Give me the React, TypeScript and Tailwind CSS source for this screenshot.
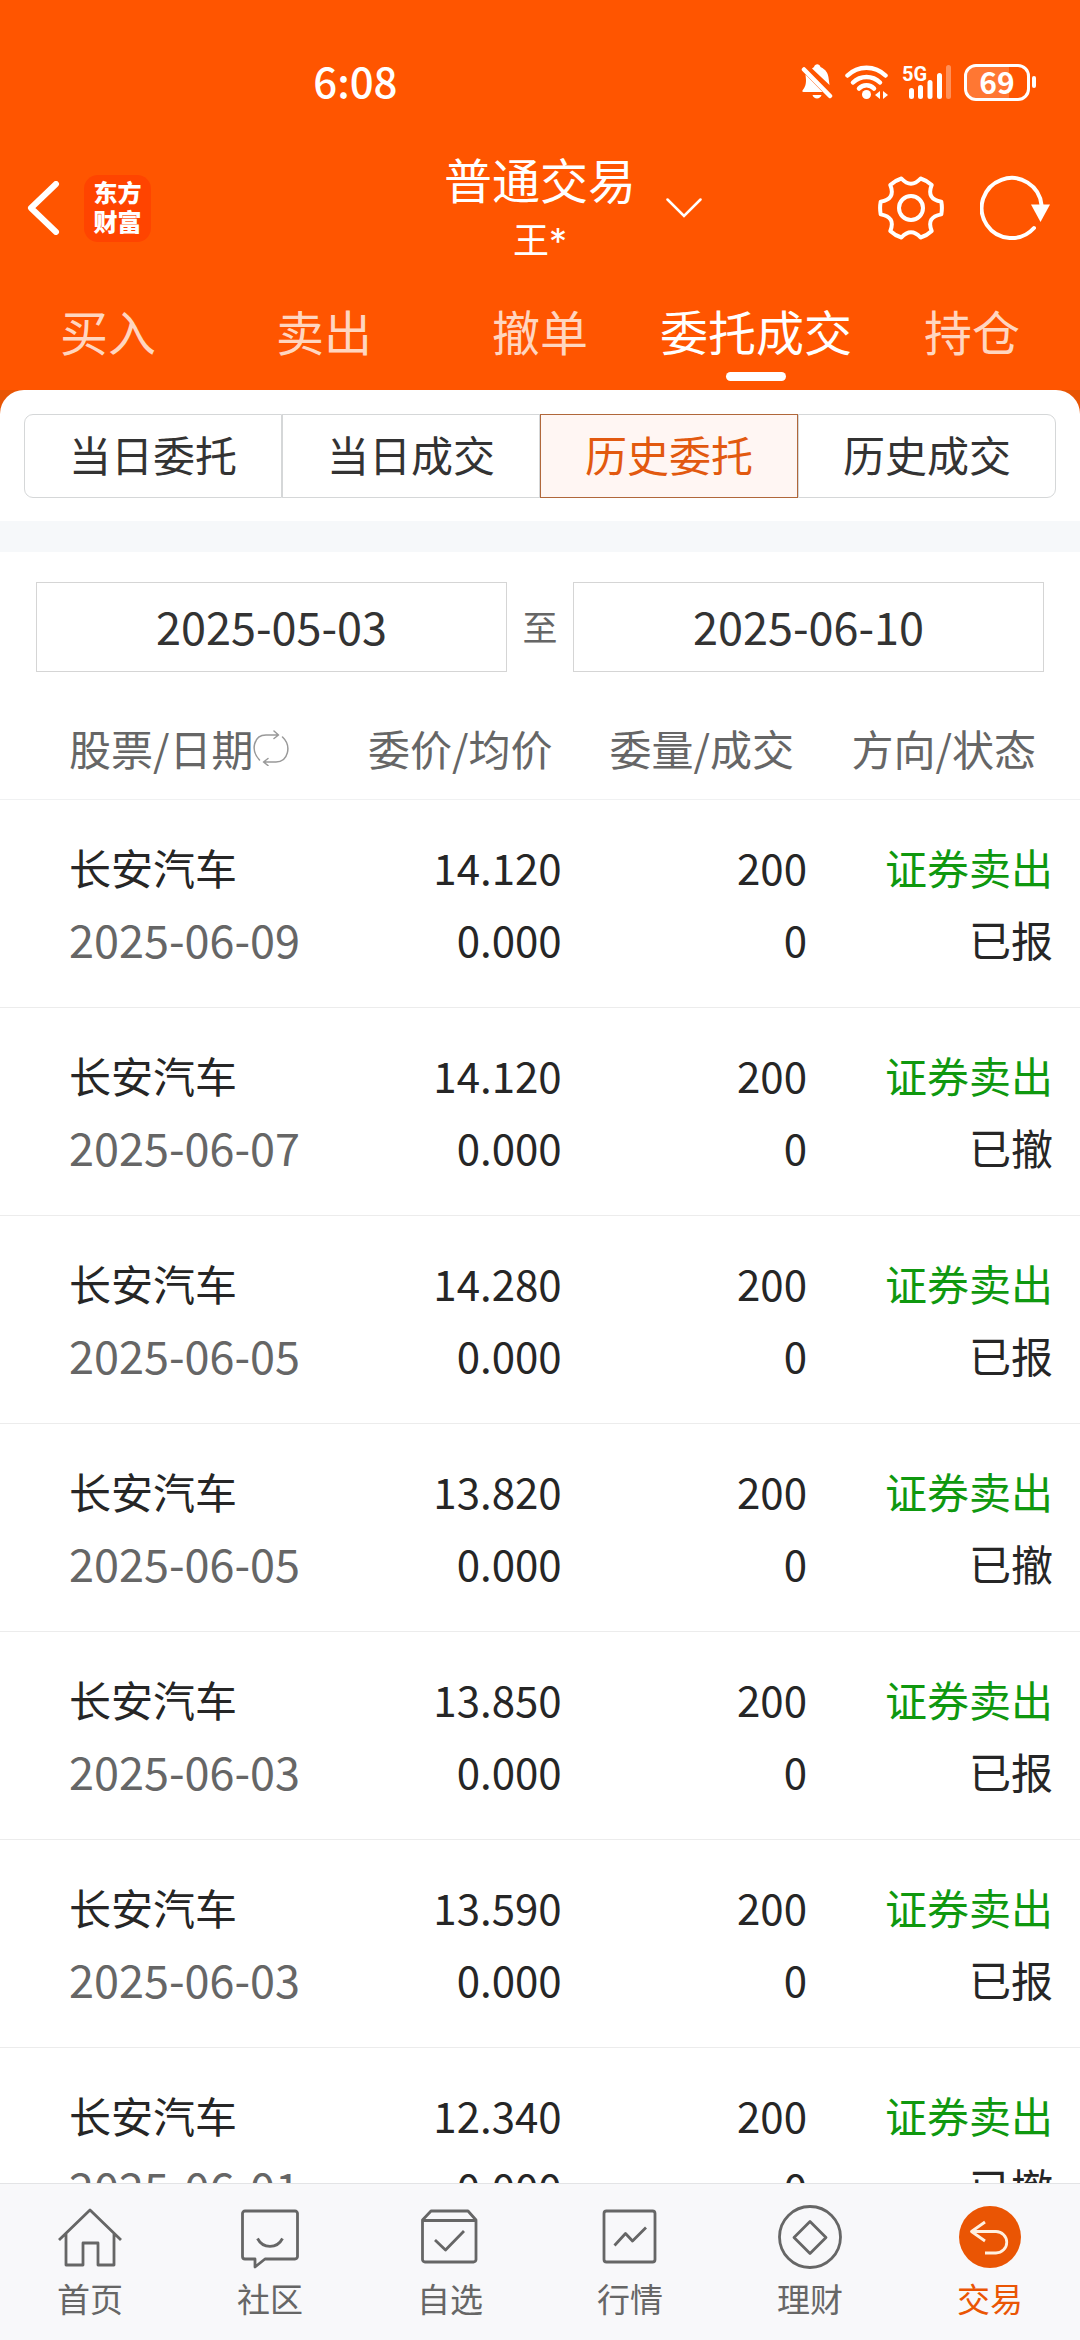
import { useState } from "react";
import type { ReactNode } from "react";
import clsx from "clsx";

const tradeTabs = ["买入", "卖出", "撤单", "委托成交", "持仓"];
const recordTabs = ["当日委托", "当日成交", "历史委托", "历史成交"];

type Order = {
  name: string;
  date: string;
  price: string;
  average: string;
  amount: number;
  filled: number;
  side: string;
  status: string;
};

const makeOrder = (date: string, price: string, status: string): Order => ({
  name: "长安汽车",
  date,
  price,
  average: "0.000",
  amount: 200,
  filled: 0,
  side: "证券卖出",
  status,
});

const orders: Order[] = [
  makeOrder("2025-06-09", "14.120", "已报"),
  makeOrder("2025-06-07", "14.120", "已撤"),
  makeOrder("2025-06-05", "14.280", "已报"),
  makeOrder("2025-06-05", "13.820", "已撤"),
  makeOrder("2025-06-03", "13.850", "已报"),
  makeOrder("2025-06-03", "13.590", "已报"),
  makeOrder("2025-06-01", "12.340", "已撤"),
];

function StatusBar() {
  return (
    <div className="flex h-16 items-center justify-between pl-[29%] pr-11">
      <span className="pb-1 text-[42px] font-medium leading-[60px]">6:08</span>
      <div className="flex items-center gap-3">
        <svg width="32" height="36" viewBox="0 0 30 36" fill="currentColor" aria-hidden="true">
          <path d="M3.500 10.500 20.500 28H1.500C.2 28 0 27 .8 26 3 23 4 21 4 16z" />
          <path d="M10 4.500 12 3C13-.6 17.500-.6 18.500 3 24 5.500 26 9.500 26.500 13.500L27.500 21z" />
          <path d="M2 5.500 28 32" stroke="currentColor" strokeWidth="4.500" strokeLinecap="round" />
          <path d="M10.500 31h9c-1 4.500-8 4.500-9 0z" />
        </svg>
        <svg width="45" height="36" viewBox="0 0 45 36" fill="none" stroke="currentColor" strokeWidth="4.500" strokeLinecap="round" aria-hidden="true">
          <path d="M2.500 11.500C13 1 30 1 40.500 11.500" />
          <path d="M8 18.500C15.500 11 27.500 11 35 18.500" />
          <path d="M14 24.500C18 20 25 20 29 24.500" />
          <circle cx="21.500" cy="30.500" r="4.500" fill="currentColor" stroke="none" />
          <path d="M35 27v8l-5-4zM38 27v8l5-4z" fill="currentColor" stroke="none" />
        </svg>
        <svg width="50" height="36" viewBox="0 0 50 36" fill="currentColor" className="overflow-visible" aria-hidden="true">
          <text x="0" y="17" className="font-['Roboto',sans-serif] text-[20px] font-bold">5G</text>
          <rect x="7" y="24" width="5" height="11" rx="2.500" />
          <rect x="16" y="21" width="5" height="14" rx="2.500" />
          <rect x="25.500" y="16" width="5" height="19" rx="2.500" />
          <rect x="35" y="9" width="5" height="26" rx="2.500" />
          <rect x="44" y="1" width="5" height="34" rx="2.500" opacity=".35" />
        </svg>
        <div className="flex items-center gap-0.5">
          <div className="relative flex h-[37px] w-[66px] items-center justify-center rounded-xl border-3 border-white">
            <div className="absolute inset-y-0 left-0 w-[70%] rounded-l-[9px] bg-white/20" />
            <span className="relative pb-0.5 text-[30px] font-bold">69</span>
          </div>
          <div className="h-3 w-1 rounded-full bg-white" />
        </div>
      </div>
    </div>
  );
}

function TitleBar() {
  return (
    <div className="mt-[34px] grid h-[120px] grid-cols-[1fr_auto_1fr] items-center">
      <div className="flex items-center gap-6 pl-[27px]">
        <button aria-label="返回">
          <svg width="33" height="54" viewBox="0 0 33 54" fill="none" stroke="currentColor" strokeWidth="6" strokeLinecap="round" strokeLinejoin="round">
            <path d="M29 3 4 27l25 24" />
          </svg>
        </button>
        <div className="w-[67px] rounded-[14px] bg-[#ff4400] pb-[7px] pt-0.5 text-center text-[24px] font-black leading-[29px]">
          东方
          <br />
          财富
        </div>
      </div>
      <div className="text-center">
        <h1 className="text-[48px] leading-[60px]">普通交易</h1>
        <p className="text-[36px] leading-[60px]">
          王<span className="font-['Inter',sans-serif] leading-none">*</span>
        </p>
      </div>
      <div className="flex items-center pl-[30px] pr-[30px]">
        <button aria-label="切换账户">
          <svg width="36" height="20" viewBox="0 0 36 20" fill="none" stroke="currentColor" strokeWidth="2.500" strokeLinecap="round">
            <path d="M1.500 1.500 18 18 34.500 1.500" />
          </svg>
        </button>
        <button aria-label="设置" className="ml-auto">
          <svg width="66" height="66" viewBox="-33 -33 66 66" fill="none" stroke="currentColor" strokeWidth="4" strokeLinejoin="round">
            <path d="M30.300 6.400Q31.500 0 30.300-6.400 15-9 20.700-23 16-27.500 9.600-29.500 0-19-9.600-29.500-16-27.500-20.700-23-15-9-30.300-6.400-31.500 0-30.300 6.400-15 9-20.700 23-16 27.500-9.600 29.500 0 19 9.600 29.500 16 27.500 20.700 23 15 9 30.300 6.400z" />
            <circle r="12" />
          </svg>
        </button>
        <button aria-label="刷新" className="ml-9">
          <svg width="70" height="66" viewBox="0 0 70 66" fill="none" stroke="currentColor" strokeWidth="4" strokeLinecap="round">
            <path d="M54 53A30 30 0 1 1 61.500 30" />
            <path d="M51 29.500h19L60.500 47z" fill="currentColor" stroke="none" />
          </svg>
        </button>
      </div>
    </div>
  );
}

const navItems: { label: string; icon: ReactNode }[] = [
  {
    label: "首页",
    icon: <path d="M1 35 32 5l31 30M8 29v31h17V38h15v22h16V29" />,
  },
  {
    label: "社区",
    icon: (
      <>
        <path d="M7 6h50a2.500 2.500 0 0 1 2.500 2.500v43A2.500 2.500 0 0 1 57 54H27l-10 8v-8H7a2.500 2.500 0 0 1-2.500-2.500v-43A2.500 2.500 0 0 1 7 6z" />
        <path d="M19.500 33.500C25 44 39 44 44.500 33.500" />
      </>
    ),
  },
  {
    label: "自选",
    icon: (
      <>
        <path d="M4.500 15 13 6h37l8 9v39.500a2.500 2.500 0 0 1-2.500 2.500H7a2.500 2.500 0 0 1-2.500-2.500zM4.500 15.500H58" />
        <path d="M17 35l10.500 10L46 26" />
      </>
    ),
  },
  {
    label: "行情",
    icon: (
      <>
        <rect x="6" y="6" width="51" height="51" rx="2.500" />
        <path d="M16.500 40.500 27.500 28.500l7 7.500L48 22.500" />
      </>
    ),
  },
  {
    label: "理财",
    icon: (
      <>
        <circle cx="32" cy="32" r="30.500" />
        <path d="M32 16.500 48 32.500 32 48.500 16 32.500z" />
      </>
    ),
  },
  {
    label: "交易",
    icon: (
      <>
        <circle cx="32" cy="32" r="31" fill="currentColor" stroke="none" />
        <path d="M27 17 13.500 26.500 27 36M13.500 26.500H38a10.700 10.700 0 0 1 0 21.500H27" stroke="#fff0e0" />
      </>
    ),
  },
];

function BottomNav() {
  return (
    <nav className="grid shrink-0 grid-cols-6 border-t border-[#e3e4e6] bg-[#f8f8fa] pb-[18px] pt-[21px]">
      {navItems.map((item) => (
        <a
          key={item.label}
          href="#"
          className={clsx(
            "flex flex-col items-center gap-[5px]",
            item.label === "交易" ? "text-[#ea5504]" : "text-[#666666]"
          )}
        >
          <svg width="64" height="64" viewBox="0 0 64 64" fill="none" stroke="currentColor" strokeWidth="2.800" strokeLinejoin="round" aria-hidden="true">
            {item.icon}
          </svg>
          <span className="text-[33px] leading-[48px]">{item.label}</span>
        </a>
      ))}
    </nav>
  );
}

export default function App() {
  const [tradeTab, setTradeTab] = useState("委托成交");
  const [recordTab, setRecordTab] = useState("历史委托");
  const [from, setFrom] = useState("2025-05-03");
  const [to, setTo] = useState("2025-06-10");

  return (
    <div className="flex h-screen flex-col overflow-hidden bg-white font-['Noto_Sans_CJK_SC',sans-serif] text-[#262626]">
      <header className="shrink-0 bg-[#ff5500] pt-[50px] text-white">
        <StatusBar />
        <TitleBar />
        <div className="grid grid-cols-5 pb-[9px] pt-[26px]">
          {tradeTabs.map((tab) => (
            <button
              key={tab}
              onClick={() => setTradeTab(tab)}
              className={clsx(
                "flex flex-col items-center gap-1.5 whitespace-nowrap text-[48px] leading-[72px]",
                tab === tradeTab ? "text-white" : "text-[#ffd6c0]"
              )}
            >
              {tab}
              <span className={clsx("h-[9px] w-[60px] rounded-full", tab === tradeTab && "bg-white")} />
            </button>
          ))}
        </div>
      </header>

      <div className="shrink-0 bg-[#e85504]">
        <div className="flex rounded-t-[24px] bg-white px-6 pb-[23px] pt-6">
          {recordTabs.map((tab) => (
            <button
              key={tab}
              onClick={() => setRecordTab(tab)}
              className={clsx(
                "h-[84px] flex-1 border pb-1 text-[42px] leading-[60px] first:rounded-l-[9px] last:rounded-r-[9px]",
                tab === recordTab
                  ? "border-[#b0673a] bg-[#fff6f3] text-[#e2590f]"
                  : "border-[#d5d7d8] text-[#333333]"
              )}
            >
              {tab}
            </button>
          ))}
        </div>
      </div>

      <div className="h-[31px] shrink-0 bg-[#f6f8fa]" />

      <main className="min-h-0 flex-1 overflow-hidden">
        <div className="flex items-center px-9 pt-[30px]">
          <input
            aria-label="开始日期"
            value={from}
            onChange={(e) => setFrom(e.target.value)}
            className="h-[90px] min-w-0 flex-1 border border-[#d5d5d5] pb-1 text-center text-[45px] text-[#333333]"
          />
          <span className="w-[66px] pb-0.5 text-center text-[35px] text-[#666666]">至</span>
          <input
            aria-label="结束日期"
            value={to}
            onChange={(e) => setTo(e.target.value)}
            className="h-[90px] min-w-0 flex-1 border border-[#d5d5d5] pb-1 text-center text-[45px] text-[#333333]"
          />
        </div>

        <table className="w-full table-fixed text-right text-[42px] leading-[72px]">
          <colgroup>
            <col className="w-[29%]" />
            <col className="w-[23%]" />
            <col className="w-[23%]" />
            <col className="w-[25%]" />
          </colgroup>
          <thead>
            <tr className="border-b border-[#f0f1f2] text-[#666666]">
              <th className="whitespace-nowrap pb-[15px] pl-[69px] pt-10 text-left font-normal">
                <button className="flex items-center">
                  股票/日期
                  <svg width="36" height="36" viewBox="0 0 36 36" fill="none" stroke="#999999" strokeWidth="1.500" strokeLinecap="round" strokeLinejoin="round" aria-hidden="true">
                    <path d="M6.500 30C-3 20 1 5 13 5h12.500M21 1l4.500 4L21 8.500" />
                    <path d="M29.500 7C39 16 35 32 23 32H10.500M15 28.500 10.500 32l4.500 3.500" />
                  </svg>
                </button>
              </th>
              <th className="pb-[15px] pr-[9px] pt-10 font-normal">委价/均价</th>
              <th className="pb-[15px] pr-4 pt-10 font-normal">委量/成交</th>
              <th className="pb-[15px] pr-11 pt-10 font-normal">方向/状态</th>
            </tr>
          </thead>
          <tbody>
            {orders.map((order, idx) => (
              <tr key={idx} className="border-b border-[#ececec]">
                <td className="whitespace-nowrap pb-8 pl-[69px] pt-[31px] text-left">
                  <div>{order.name}</div>
                  <div className="text-[45px] text-[#666666]">{order.date}</div>
                </td>
                <td className="pb-8 pt-[31px]">
                  <div>{order.price}</div>
                  <div>{order.average}</div>
                </td>
                <td className="pb-8 pr-[3px] pt-[31px]">
                  <div>{order.amount}</div>
                  <div>{order.filled}</div>
                </td>
                <td className="pb-8 pr-[27px] pt-[31px]">
                  <div className="text-[#0f980f]">{order.side}</div>
                  <div>{order.status}</div>
                </td>
              </tr>
            ))}
          </tbody>
        </table>
      </main>

      <BottomNav />
    </div>
  );
}
